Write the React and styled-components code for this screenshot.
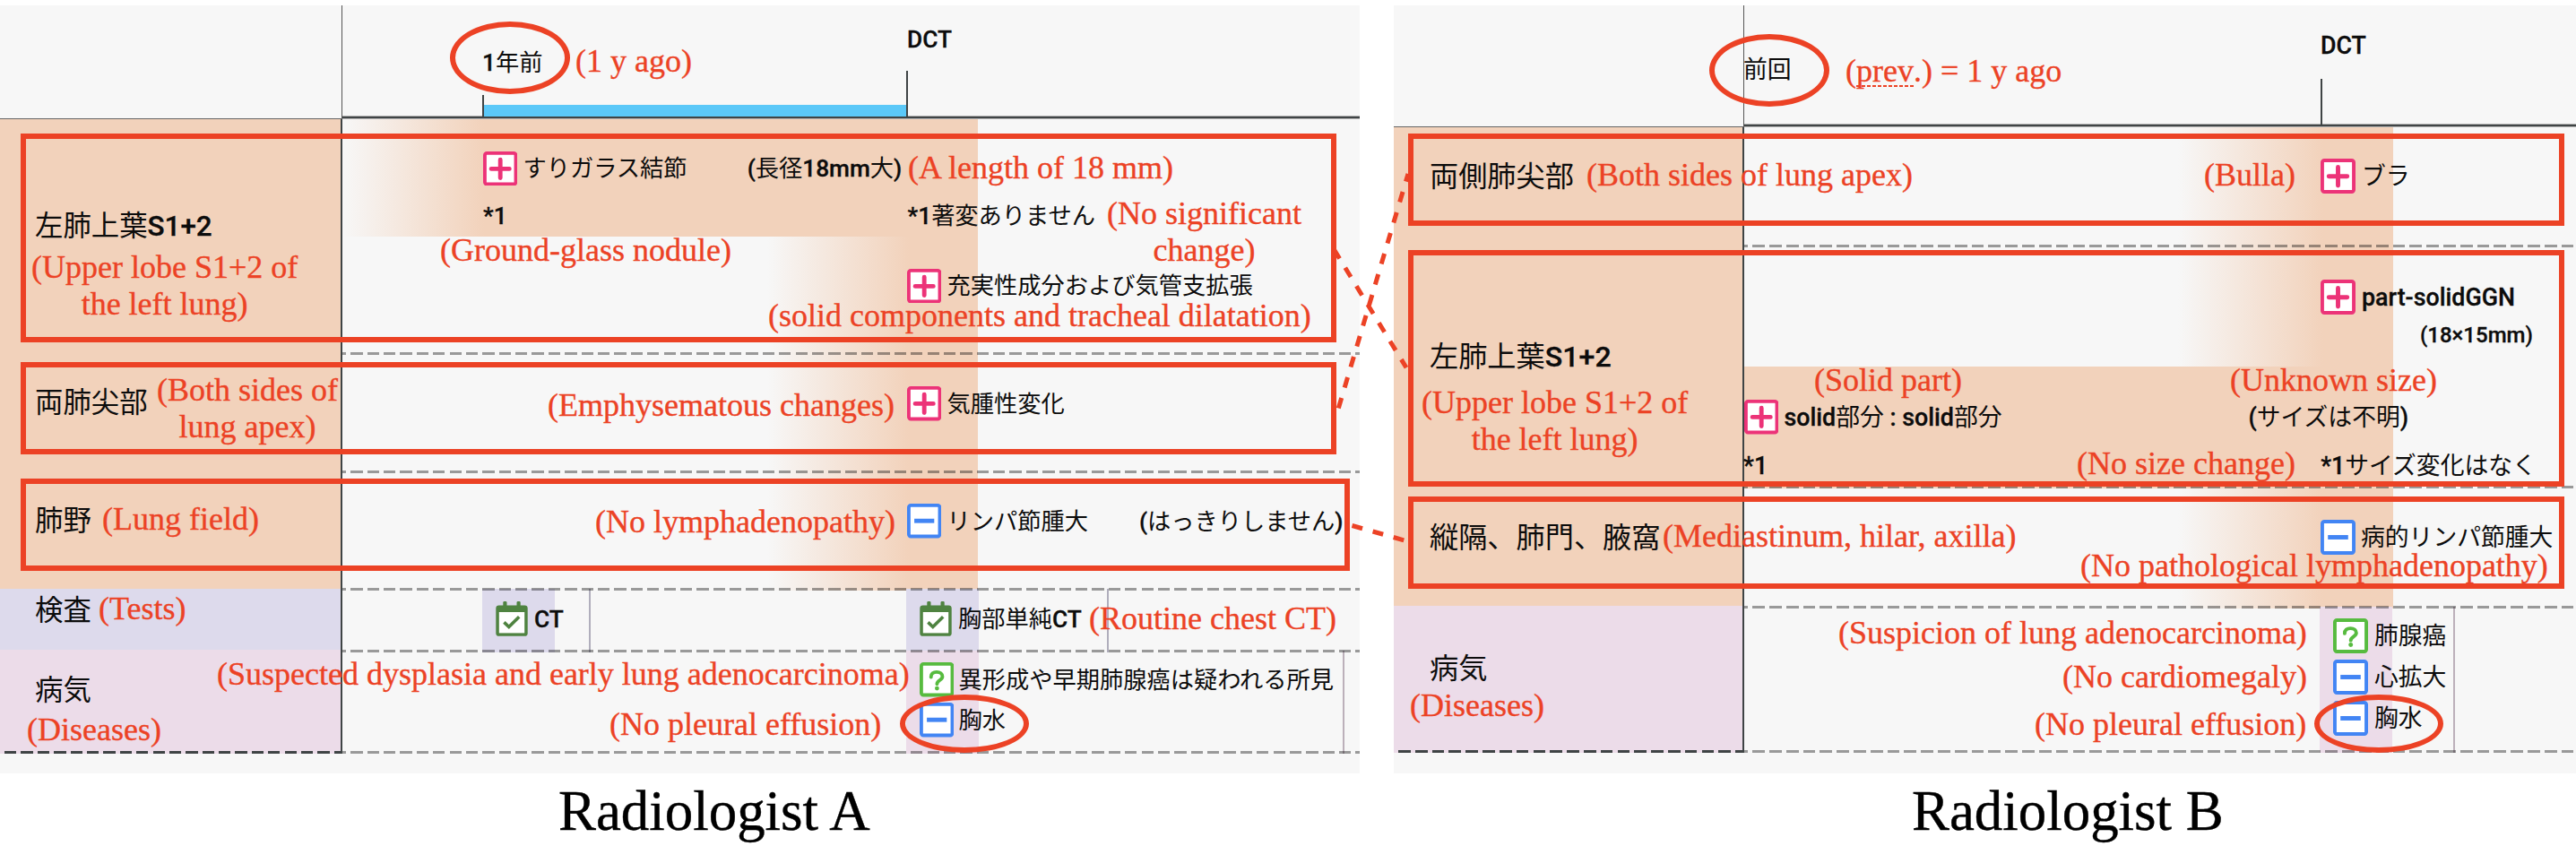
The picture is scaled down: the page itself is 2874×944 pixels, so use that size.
import React from 'react';
import styled, { createGlobalStyle } from 'styled-components';

const RED = '#ec4225';
const INK = '#3f4445';
const PEACH = '#f2d2bb';
const LAVENDER = '#dddaec';
const PINK = '#ecdce9';
const DASH = 'rgba(0, 0, 0, 0.38)';

const GlobalStyle = createGlobalStyle`
  body {
    margin: 0;
    background: #fff;
    color: #0c0c0c;
  }
  * {
    box-sizing: border-box;
  }
`;

const Page = styled.main`
  position: relative;
  display: flex;
  gap: 38px;
  width: 2874px;
  height: 944px;
  padding-top: 6px;
  overflow: hidden;
`;

const Figure = styled.figure`
  flex: none;
  width: ${(p) => p.$width}px;
  margin: 0;
`;

const Caption = styled.figcaption`
  margin-top: 7px;
  padding-left: ${(p) => p.$indent}px;
  font: 62.9px/70px 'Liberation Serif', serif;
  color: #000;
  white-space: nowrap;
  -webkit-text-stroke: 0.4px currentColor;
`;

const Panel = styled.section`
  height: 857px;
  overflow: hidden;
  background: #f7f7f7;
  font-family: Roboto, 'Noto Sans CJK JP', sans-serif;
  font-size: ${(p) => p.$font}px;
`;

const Row = styled.div`
  display: flex;
  height: ${(p) => p.$height}px;
`;

const Corner = styled.div`
  flex: none;
  width: ${(p) => p.$width}px;
  border-right: 1px solid #555;
  border-bottom: 1px solid #666;
`;

const Axis = styled.div`
  flex: 1;
  display: grid;
  grid-template-columns: ${(p) => p.$columns};
  align-items: end;
  margin-bottom: 1px;
  border-bottom: 2px solid ${INK};
  box-shadow: 0 1px rgba(0, 0, 0, 0.28), inset 0 -1px rgba(0, 0, 0, 0.28);
`;

const Marker = styled.div`
  grid-column: ${(p) => p.$column};
  display: flex;
  flex-direction: column;
  gap: ${(p) => p.$gap}px;
`;

const Tick = styled.div`
  display: flex;
  align-items: flex-end;
  height: ${(p) => p.$height}px;
  border-left: 2px solid ${(p) => (p.$hidden ? 'transparent' : INK)};
`;

const Interval = styled.div`
  flex: 1;
  height: 13px;
  background: #5bc8f8;
`;

const LabelCell = styled.div`
  flex: none;
  display: flex;
  align-items: center;
  width: ${(p) => p.$width}px;
  margin-top: ${(p) => (p.$raise ? -p.$raise : 0)}px;
  padding: 0 0 ${(p) => p.$lift || 24}px ${(p) => p.$indent}px;
  border-right: 2px solid ${INK};
  background-color: ${(p) => p.$color};
  background-repeat: no-repeat;
  background-position: left bottom;
  background-size: 100% 3px;
  background-image: ${(p) =>
    p.$last
      ? `repeating-linear-gradient(90deg, transparent 0 5.1px, ${INK} 5.1px ${p.$period}px)`
      : 'none'};
  font-size: ${(p) => p.$font}px;
`;

const Track = styled.div`
  position: relative;
  flex: 1;
  min-width: 0;
  display: flex;
  flex-direction: column;
  padding-left: ${(p) => p.$indent || 0}px;
  background-repeat: no-repeat;
  background-image: ${(p) => (p.$bands ? p.$bands.map((b) => b.image).join(', ') : 'none')};
  background-size: ${(p) => (p.$bands ? p.$bands.map((b) => b.size).join(', ') : 'auto')};
  background-position: ${(p) => (p.$bands ? p.$bands.map((b) => b.at).join(', ') : '0 0')};

  &::after {
    content: '';
    position: absolute;
    z-index: 1;
    inset: auto 0 0 0;
    height: 3px;
    background: repeating-linear-gradient(
      90deg,
      ${DASH} 0 4.2px,
      transparent 4.2px 9.3px,
      ${DASH} 9.3px ${(p) => p.$period}px
    );
  }
`;

const Line = styled.div`
  flex: none;
  display: flex;
  align-items: center;
  height: ${(p) => p.$height}px;
  margin-top: ${(p) => p.$before || 0}px;
  padding-left: ${(p) => p.$indent || 0}px;
`;

const Cells = styled.div`
  flex: 1;
  display: flex;
  gap: ${(p) => p.$gap || 0}px;
  margin-top: -2px;
`;

const Cell = styled.div`
  display: flex;
  flex-direction: column;
  gap: ${(p) => p.$gap || 0}px;
  width: ${(p) => p.$width}px;
  padding: ${(p) => p.$top}px 0 0 15px;
  border-right: 2px solid rgba(0, 0, 0, 0.2);
  background: linear-gradient(90deg, ${(p) => p.$color} 81px, transparent 81px);
`;

const Words = styled.span`
  flex: none;
  margin-left: ${(p) => p.$before || 0}px;
  font-size: ${(p) => (p.$size ? `${p.$size}px` : 'inherit')};
  line-height: 30px;
  white-space: pre;
`;

const Latin = styled.span`
  font-weight: 500;
  -webkit-text-stroke: 0.3px currentColor;
`;

function Text({ children, before, size }) {
  const parts = children.split(/([\x20-\x7e×]+)/);
  return (
    <Words $before={before} $size={size}>
      {parts.map((part, i) => (i % 2 ? <Latin key={i}>{part}</Latin> : part))}
    </Words>
  );
}

const Svg = styled.svg`
  flex: none;
  display: block;
  width: ${(p) => p.$w}px;
  height: ${(p) => p.$h}px;
`;

const ICON_COLORS = { plus: '#ec3378', minus: '#4285f4', question: '#57bb3f' };

function StatusIcon({ kind, size = 38.4 }) {
  const color = ICON_COLORS[kind];
  return (
    <Svg $w={size} $h={size} viewBox="0 0 38 38" fill="none" stroke={color} strokeLinecap="round">
      <rect x="1.9" y="1.9" width="34.2" height="34.2" rx="2.2" fill="#fff" strokeWidth="3.8" />
      {kind === 'plus' && <path d="M9 19.2H29M19 9.2V29.2" strokeWidth="4.8" />}
      {kind === 'minus' && <path d="M8 19H30" strokeWidth="4.8" strokeLinecap="butt" />}
      {kind === 'question' && (
        <>
          <path d="M12.6 16.4C12.4 12.7 15.2 10.8 18.8 10.8C22.6 10.8 25.2 12.8 25.2 15.8C25.2 19.8 19.2 19.8 19.2 24" strokeWidth="3.8" />
          <circle cx="19.2" cy="28.8" r="2.4" fill={color} stroke="none" />
        </>
      )}
    </Svg>
  );
}

function CalendarIcon() {
  return (
    <Svg $w={36} $h={39} viewBox="0 0 36 39">
      <rect x="8.3" y="0" width="4.2" height="8" rx="1.4" fill="#4f8341" />
      <rect x="23.5" y="0" width="4.2" height="8" rx="1.4" fill="#4f8341" />
      <rect x="0.3" y="4.4" width="35.4" height="34.4" rx="3.4" fill="#4f8341" />
      <rect x="3.8" y="12" width="28.4" height="23.4" fill="#fff" />
      <path d="M9.4 23.4L14.8 28.6L26.2 17.2" fill="none" stroke="#4f8341" strokeWidth="3.6" />
    </Svg>
  );
}

/* Remarks laid over both charts; a note's $y is its first baseline. */
const Overlay = styled.div`
  position: absolute;
  z-index: 2;
  inset: 0;
  color: ${RED};
  font: 36px/41px 'Liberation Serif', serif;
`;

const Note = styled.div`
  position: absolute;
  left: ${(p) => p.$x + 1}px;
  top: ${(p) => p.$y - 32}px;
  text-align: center;
  white-space: pre;
  -webkit-text-stroke: 0.35px currentColor;
`;

const Misspelt = styled.span`
  display: inline-block;
  line-height: 36px;
  background: repeating-linear-gradient(90deg, ${RED} 0 4px, transparent 4px 6px) 0 100% / 100% 2px no-repeat;
`;

const Frame = styled.div`
  position: absolute;
  left: ${(p) => p.$x}px;
  top: ${(p) => p.$y}px;
  width: ${(p) => p.$w}px;
  height: ${(p) => p.$h}px;
  border: 6px solid ${RED};
  border-radius: ${(p) => (p.$round ? '50%' : 0)};
`;

const Links = styled.svg`
  position: absolute;
  left: 0;
  top: 0;
  width: 2874px;
  height: 944px;
`;

const fade = (from, full, end) =>
  `linear-gradient(90deg, rgba(242, 210, 187, 0) ${from}px, ${PEACH} ${full}px ${end}px, transparent ${end}px)`;

const fadeA = [{ image: fade(474, 632, 709), size: '100% 100%', at: '0 0' }];
const leadA = [
  { image: fade(0, 158, 709), size: '100% 131px', at: '0 0' },
  { image: fade(474, 632, 709), size: '100% 132px', at: '0 131px' },
];
const fadeB = [{ image: fade(484, 646, 724), size: '100% 100%', at: '0 0' }];
const bandB = [
  { image: fade(484, 646, 724), size: '100% 133px', at: '0 0' },
  { image: fade(-1, 0, 724), size: '100% 136px', at: '0 133px' },
];

const labelA = { $width: 382, $indent: 39, $font: 31.4, $period: 18.38 };
const labelB = { $width: 391, $indent: 40, $font: 32.2, $period: 18.8 };

function ChartA() {
  return (
    <Panel $font={26.25}>
      <Row $height={127}>
        <Corner $width={382} />
        <Axis $columns="156px 473px 1fr">
          <Marker $column={2} $gap={21}>
            <Text before={0}>1年前</Text>
            <Tick $height={24}>
              <Interval />
            </Tick>
          </Marker>
          <Marker $column={3} $gap={20}>
            <Text before={1}>DCT</Text>
            <Tick $height={51} />
          </Marker>
        </Axis>
      </Row>
      <Row $height={263}>
        <LabelCell {...labelA} $color={PEACH}><Text>左肺上葉S1+2</Text></LabelCell>
        <Track $period={18.38} $bands={leadA}>
          <Line $before={36} $height={38} $indent={157}>
            <StatusIcon kind="plus" />
            <Text before={6}>すりガラス結節</Text>
            <Text before={67}>(長径18mm大)</Text>
          </Line>
          <Line $before={19} $height={30} $indent={157}>
            <Text>*1</Text>
            <Text before={447}>*1著変ありません</Text>
          </Line>
          <Line $before={44} $height={38} $indent={630}>
            <StatusIcon kind="plus" />
            <Text before={6}>充実性成分および気管支拡張</Text>
          </Line>
        </Track>
      </Row>
      <Row $height={132}>
        <LabelCell {...labelA} $color={PEACH}><Text>両肺尖部</Text></LabelCell>
        <Track $period={18.38} $bands={fadeA}>
          <Line $before={35} $height={39} $indent={630}>
            <StatusIcon kind="plus" />
            <Text before={6}>気腫性変化</Text>
          </Line>
        </Track>
      </Row>
      <Row $height={131}>
        <LabelCell {...labelA} $color={PEACH}><Text>肺野</Text></LabelCell>
        <Track $period={18.38} $bands={fadeA}>
          <Line $before={34} $height={39} $indent={630}>
            <StatusIcon kind="minus" />
            <Text before={6}>リンパ節腫大</Text>
            <Text before={57}>(はっきりしません)</Text>
          </Line>
        </Track>
      </Row>
      <Row $height={69}>
        <LabelCell {...labelA} $color={LAVENDER} $raise={2} $lift={22}><Text>検査</Text></LabelCell>
        <Track $period={18.38} $indent={156}>
          <Cells $gap={352}>
            <Cell $width={121} $top={14} $color={LAVENDER}>
              <Line $height={39}>
                <CalendarIcon />
                <Text before={7}>CT</Text>
              </Line>
            </Cell>
            <Cell $width={226} $top={14} $color={LAVENDER}>
              <Line $height={39}>
                <CalendarIcon />
                <Text before={7}>胸部単純CT</Text>
              </Line>
            </Cell>
          </Cells>
        </Track>
      </Row>
      <Row $height={113}>
        <LabelCell {...labelA} $color={PINK} $raise={3} $last><Text>病気</Text></LabelCell>
        <Track $period={18.38} $indent={629}>
          <Cells>
            <Cell $width={489} $top={13} $gap={6} $color={PINK}>
              <Line $height={39}>
                <StatusIcon kind="question" />
                <Text before={5}>異形成や早期肺腺癌は疑われる所見</Text>
              </Line>
              <Line $height={39}>
                <StatusIcon kind="minus" />
                <Text before={5}>胸水</Text>
              </Line>
            </Cell>
          </Cells>
        </Track>
      </Row>
    </Panel>
  );
}

function ChartB() {
  return (
    <Panel $font={26.8}>
      <Row $height={136}>
        <Corner $width={391} />
        <Axis $columns="643px 1fr">
          <Marker $column={1} $gap={46}>
            <Text before={-1}>前回</Text>
            <Tick $height={0} $hidden />
          </Marker>
          <Marker $column={2} $gap={22}>
            <Text>DCT</Text>
            <Tick $height={51} />
          </Marker>
        </Axis>
      </Row>
      <Row $height={134}>
        <LabelCell {...labelB} $color={PEACH}><Text>両側肺尖部</Text></LabelCell>
        <Track $period={18.8} $bands={fadeB}>
          <Line $before={35} $height={39} $indent={643}>
            <StatusIcon kind="plus" size={39} />
            <Text before={7}>ブラ</Text>
          </Line>
        </Track>
      </Row>
      <Row $height={269}>
        <LabelCell {...labelB} $color={PEACH} $lift={26}><Text>左肺上葉S1+2</Text></LabelCell>
        <Track $period={18.8} $bands={bandB}>
          <Line $before={36} $height={39} $indent={643}>
            <StatusIcon kind="plus" size={39} />
            <Text before={7}>part-solidGGN</Text>
          </Line>
          <Line $before={8} $height={30} $indent={754}>
            <Text size={24}>(18×15mm)</Text>
          </Line>
          <Line $before={57} $height={39}>
            <StatusIcon kind="plus" size={38.4} />
            <Text before={6}>solid部分 : solid部分</Text>
            <Text before={275}>(サイズは不明)</Text>
          </Line>
          <Line $before={20} $height={30}>
            <Text before={-1}>*1</Text>
            <Text before={617}>*1サイズ変化はなく</Text>
          </Line>
        </Track>
      </Row>
      <Row $height={134}>
        <LabelCell {...labelB} $color={PEACH}><Text>縦隔、肺門、腋窩</Text></LabelCell>
        <Track $period={18.8} $bands={fadeB}>
          <Line $before={35} $height={39} $indent={643}>
            <StatusIcon kind="minus" size={39} />
            <Text before={6}>病的リンパ節腫大</Text>
          </Line>
        </Track>
      </Row>
      <Row $height={161}>
        <LabelCell {...labelB} $color={PINK} $raise={3} $last><Text>病気</Text></LabelCell>
        <Track $period={18.8} $indent={642}>
          <Cells>
            <Cell $width={151} $top={13} $gap={7} $color={PINK}>
              <Line $height={39}>
                <StatusIcon kind="question" size={39} />
                <Text before={7}>肺腺癌</Text>
              </Line>
              <Line $height={39}>
                <StatusIcon kind="minus" size={39} />
                <Text before={7}>心拡大</Text>
              </Line>
              <Line $height={39}>
                <StatusIcon kind="minus" size={39} />
                <Text before={7}>胸水</Text>
              </Line>
            </Cell>
          </Cells>
        </Track>
      </Row>
    </Panel>
  );
}

export default function App() {
  return (
    <Page>
      <GlobalStyle />
      <Figure $width={1517}>
        <ChartA />
        <Caption $indent={623}>Radiologist A</Caption>
      </Figure>
      <Figure $width={1319}>
        <ChartB />
        <Caption $indent={578}>Radiologist B</Caption>
      </Figure>

      <Overlay>
        <Frame $x={23} $y={149} $w={1468} $h={233} />
        <Frame $x={23} $y={404} $w={1468} $h={103} />
        <Frame $x={23} $y={534} $w={1483} $h={103} />
        <Frame $x={1571} $y={149} $w={1290} $h={103} />
        <Frame $x={1571} $y={279} $w={1290} $h={264} />
        <Frame $x={1571} $y={554} $w={1290} $h={103} />
        <Frame $round $x={502} $y={24} $w={134} $h={81} />
        <Frame $round $x={1004} $y={775} $w={144} $h={65} />
        <Frame $round $x={1907} $y={38} $w={134} $h={81} />
        <Frame $round $x={2582} $y={775} $w={144} $h={65} />
        <Links stroke={RED} strokeWidth="5" strokeDasharray="12 12" fill="none">
          <path d="M1488.3 278.3L1569 410.3" />
          <path d="M1493.3 455.5L1571 194" />
          <path d="M1508.5 586.5L1567 603" />
        </Links>

        <Note $x={641} $y={80}>(1 y ago)</Note>
        <Note $x={34} $y={310}>{'(Upper lobe S1+2 of\nthe left lung)'}</Note>
        <Note $x={490} $y={291}>(Ground-glass nodule)</Note>
        <Note $x={1012} $y={199}>(A length of 18 mm)</Note>
        <Note $x={1234} $y={250}>{'(No significant\nchange)'}</Note>
        <Note $x={856} $y={364}>(solid components and tracheal dilatation)</Note>
        <Note $x={174} $y={447}>{'(Both sides of\nlung apex)'}</Note>
        <Note $x={610} $y={464}>(Emphysematous changes)</Note>
        <Note $x={113} $y={591}>(Lung field)</Note>
        <Note $x={663} $y={594}>(No lymphadenopathy)</Note>
        <Note $x={109} $y={691}>(Tests)</Note>
        <Note $x={1214} $y={702}>(Routine chest CT)</Note>
        <Note $x={241} $y={764}>(Suspected dysplasia and early lung adenocarcinoma)</Note>
        <Note $x={679} $y={820}>(No pleural effusion)</Note>
        <Note $x={29} $y={826}>(Diseases)</Note>

        <Note $x={2058} $y={91}>(<Misspelt>prev</Misspelt>.) = 1 y ago</Note>
        <Note $x={1769} $y={207}>(Both sides of lung apex)</Note>
        <Note $x={2458} $y={207}>(Bulla)</Note>
        <Note $x={1585} $y={461}>{'(Upper lobe S1+2 of\nthe left lung)'}</Note>
        <Note $x={2023} $y={436}>(Solid part)</Note>
        <Note $x={2487} $y={436}>(Unknown size)</Note>
        <Note $x={2316} $y={529}>(No size change)</Note>
        <Note $x={1854} $y={610}>(Mediastinum, hilar, axilla)</Note>
        <Note $x={2320} $y={643}>(No pathological lymphadenopathy)</Note>
        <Note $x={2050} $y={718}>(Suspicion of lung adenocarcinoma)</Note>
        <Note $x={2300} $y={767}>(No cardiomegaly)</Note>
        <Note $x={2269} $y={820}>(No pleural effusion)</Note>
        <Note $x={1572} $y={799}>(Diseases)</Note>
      </Overlay>
    </Page>
  );
}
